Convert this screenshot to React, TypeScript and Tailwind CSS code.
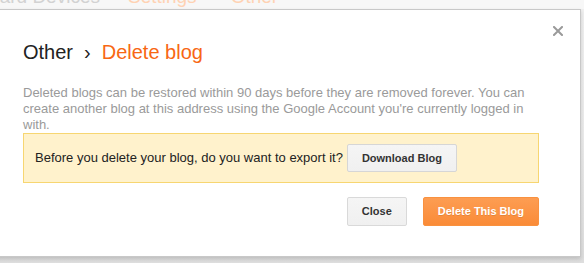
import React from "react";

export default function App() {
  return (
    <div className="relative w-[584px] h-[263px] overflow-hidden flex flex-col font-['Liberation_Sans',Arial,sans-serif] bg-[#f2f2f2]">
      {/* background page header (faded behind the modal) */}
      <div className="h-[9px] overflow-hidden bg-[#f7f7f7] shrink-0">
        <div className="flex items-baseline mt-[-14px] text-[19px] leading-[22px] whitespace-nowrap">
          <span className="ml-[-50px] text-[#d2d2d2]">Standard Devices</span>
          <span className="ml-[28px] text-[#ffd2b3]">Settings</span>
          <span className="ml-[34px] text-[#ffd2b3]">Other</span>
        </div>
      </div>
      <div className="flex-1 bg-linear-to-b from-[#f0f0f0] via-[#ececec] to-[#dedede]" />

      {/* modal dialog */}
      <div className="absolute left-[-10px] top-[9px] w-[591px] h-[248px] bg-white border border-[#c8c8c8] shadow-[0_2px_4px_rgba(0,0,0,0.15)] pl-[32px] pr-[41px] pt-[30px]">
        <button className="absolute right-[17px] top-[15px] w-[11px] h-[11px] flex items-center justify-center">
          <svg width="10" height="10" viewBox="0 0 10 10">
            <path d="M1 1 L9 9 M9 1 L1 9" stroke="#9a9a9a" strokeWidth="2" strokeLinecap="square" />
          </svg>
        </button>

        <h1 className="text-[20px] leading-[24px] text-[#222] font-normal whitespace-nowrap">
          Other
          <span className="mx-[11px] text-[#222]">›</span>
          <span className="text-[#f86713]">Delete blog</span>
        </h1>

        <p className="mt-[21px] text-[13px] leading-[16px] text-[#9a9a9a]">
          Deleted blogs can be restored within 90 days before they are removed forever. You can
          create another blog at this address using the Google Account you're currently logged in
          with.
        </p>

        <div className="h-[50px] border border-[#f7d671] bg-[#fff2cc] pl-[11px] flex items-center text-[13px] text-[#222]">
          <span>Before you delete your blog, do you want to export it?</span>
          <button className="ml-[4px] h-[28px] px-[14px] rounded-[2px] border border-[#d6d6d6] bg-linear-to-b from-[#f5f5f5] to-[#f0f0f0] text-[11px] font-bold text-[#333]">
            Download Blog
          </button>
        </div>

        <div className="mt-[14px] flex justify-end gap-[16px]">
          <button className="h-[29px] px-[14px] rounded-[2px] border border-[#d9d9d9] bg-linear-to-b from-[#f5f5f5] to-[#f0f0f0] text-[11px] font-bold text-[#333]">
            Close
          </button>
          <button className="h-[29px] px-[14px] rounded-[2px] border border-[#f9913f] bg-linear-to-b from-[#fd9d52] to-[#fa8b37] text-[11px] font-bold text-white [text-shadow:0_1px_0_rgba(0,0,0,0.1)]">
            Delete This Blog
          </button>
        </div>
      </div>
    </div>
  );
}
